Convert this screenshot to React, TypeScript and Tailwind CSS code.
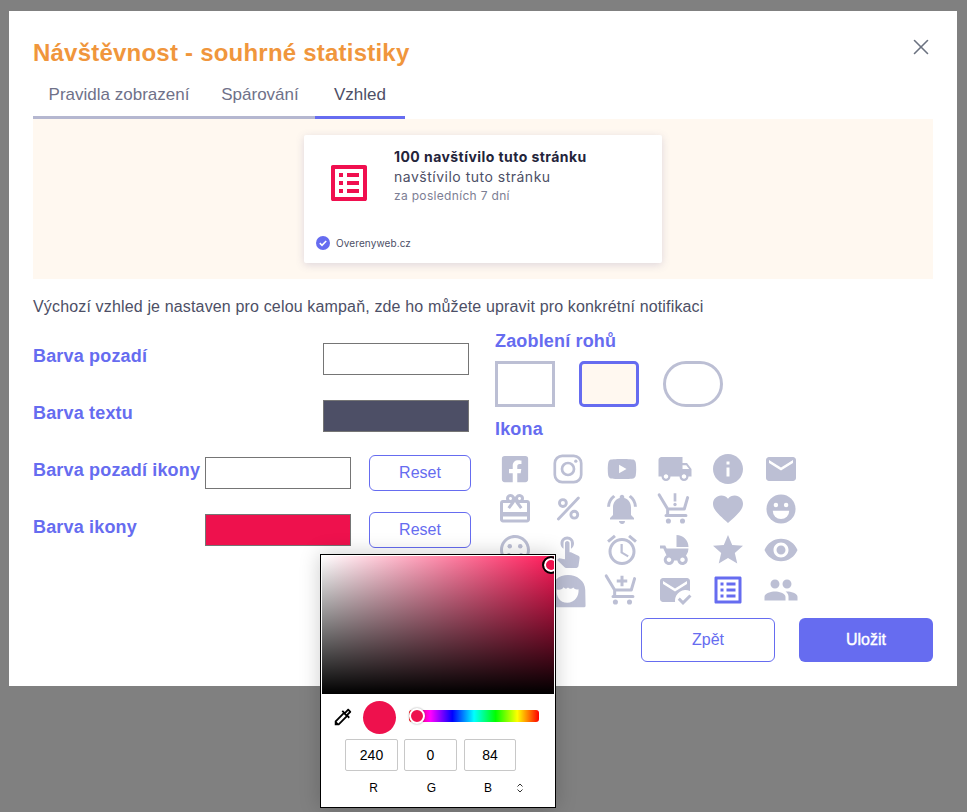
import { X } from "lucide-react";
import { FaFacebookSquare, FaYoutube } from "react-icons/fa";
import {
  MdLocalShipping,
  MdInfo,
  MdEmail,
  MdCardGiftcard,
  MdNotificationsActive,
  MdFavorite,
  MdOutlineSentimentSatisfied,
  MdTouchApp,
  MdOutlineAlarm,
  MdChildFriendly,
  MdStar,
  MdVisibility,
  MdMarkEmailRead,
  MdListAlt,
  MdPeople,
  MdOutlineColorize,
} from "react-icons/md";

const GRAY = "#bcbfd4";

function Instagram() {
  return (
    <svg width={36} height={36} viewBox="0 0 24 24" fill="none" stroke={GRAY} strokeWidth={1.8}>
      <rect x={3.2} y={3.2} width={17.6} height={17.6} rx={5} />
      <circle cx={12} cy={12} r={4} />
      <circle cx={17.2} cy={6.8} r={1.1} fill={GRAY} stroke="none" />
    </svg>
  );
}

function Percent() {
  return (
    <svg width={36} height={36} viewBox="0 0 24 24" fill="none" stroke={GRAY} strokeWidth={1.9}>
      <circle cx={8.6} cy={8} r={2.3} />
      <circle cx={16.2} cy={15.8} r={2.3} />
      <path d="M18.9 4.7 5.6 18.7" strokeLinecap="round" />
    </svg>
  );
}

function Cart({ mark }: { mark: "alert" | "plus" }) {
  return (
    <svg width={36} height={36} viewBox="0 0 24 24" fill="none" stroke={GRAY} strokeWidth={2}>
      <path d="M1.500 2.600 7.100 12v4.400M7.100 12h11.100l2.200-7.600M6 16.400h13.300" strokeLinecap="round" strokeLinejoin="round" />
      <circle cx={7.600} cy={20} r={1.700} fill={GRAY} stroke="none" />
      <circle cx={17} cy={20} r={1.700} fill={GRAY} stroke="none" />
      {mark === "alert" ? (
        <>
          <path d="M12 1.500V7" strokeWidth={1.800} />
          <circle cx={12} cy={9} r={1.100} fill={GRAY} stroke="none" />
        </>
      ) : (
        <path d="M12 2.500v7M8.500 6h7" strokeWidth={2} />
      )}
    </svg>
  );
}

function Smile() {
  return (
    <svg width={36} height={36} viewBox="0 0 24 24">
      <circle cx={12} cy={12} r={9.700} fill={GRAY} />
      <circle cx={8.600} cy={9.300} r={1.500} fill="#fff" />
      <circle cx={15.400} cy={9.300} r={1.500} fill="#fff" />
      <path d="M6.500 13.200h11a5.500 5.500 0 0 1-11 0z" fill="#fff" />
    </svg>
  );
}

function Woman() {
  return (
    <svg width={36} height={36} viewBox="0 0 24 24">
      <path d="M1 23.500V12C1 6 6 2 12 2s11.500 4 11.500 10l.2 10.500q0 1-1 1z" fill={GRAY} />
      <path
        d="M4.500 11.500c2 1 4-.2 4.500-1.300 1 1 2 1.300 3 .2 1 1.100 2.500 1 3.500 0 .8 1 2 1.600 3.500 1.100.5 4.500-2.500 9-7.500 9s-7.500-4-7-9z"
        fill="#fff"
      />
    </svg>
  );
}

const cls = "text-[#bcbfd4]";
const icons = [
  <FaFacebookSquare key="fb" size={30} className={cls} />,
  <Instagram key="ig" />,
  <FaYoutube key="yt" size={30} className={cls} />,
  <MdLocalShipping key="tr" size={36} className={cls} />,
  <MdInfo key="in" size={36} className={cls} />,
  <MdEmail key="em" size={36} className={cls} />,
  <MdCardGiftcard key="gi" size={36} className={cls} />,
  <Percent key="pc" />,
  <MdNotificationsActive key="be" size={36} className={cls} />,
  <Cart key="ca" mark="alert" />,
  <MdFavorite key="he" size={36} className={cls} />,
  <Smile key="sm" />,
  <MdOutlineSentimentSatisfied key="sa" size={36} className={cls} />,
  <MdTouchApp key="to" size={36} className={cls} />,
  <MdOutlineAlarm key="al" size={36} className={cls} />,
  <MdChildFriendly key="ch" size={36} className={cls} />,
  <MdStar key="st" size={36} className={cls} />,
  <MdVisibility key="ey" size={36} className={cls} />,
  <MdOutlineSentimentSatisfied key="hid" size={36} className={cls} />,
  <Woman key="wo" />,
  <Cart key="cp" mark="plus" />,
  <MdMarkEmailRead key="er" size={36} className={cls} />,
  <MdListAlt key="li" size={36} className="text-[#666cf0]" />,
  <MdPeople key="pe" size={36} className={cls} />,
];

function Label({ children }: { children: string }) {
  return <div className="text-[18px] leading-[26px] font-bold tracking-[0.17px] text-[#666cf0] whitespace-nowrap">{children}</div>;
}

function Swatch({ className }: { className: string }) {
  return <div className={`w-[146px] h-[32px] border border-[#757575] ${className}`} />;
}

function Reset() {
  return (
    <button className="w-[102px] h-[36px] -mt-[2px] ml-[18px] rounded-[6px] border border-[#666cf0] bg-white text-[16px] text-[#666cf0]">
      Reset
    </button>
  );
}

function Picker() {
  return (
    <div className="absolute left-[320px] top-[554px] w-[236px] h-[254px] bg-white border border-black p-[1px] shadow-[0_0_20px_rgba(0,0,0,0.2)]">
      <div className="relative h-[138px] overflow-hidden bg-[linear-gradient(to_top,#000,transparent),linear-gradient(to_right,#fff,#ff1a59)]">
        <div className="absolute left-[222px] top-[2px] w-[14px] h-[14px] rounded-full bg-[#ee114d] border-2 border-white outline-2 outline-black" />
      </div>
      <div className="flex items-center h-[46px] pl-[12px]">
        <MdOutlineColorize size={22} className="text-black -ml-[2px]" />
        <div className="w-[33px] h-[33px] ml-[9px] rounded-full bg-[#ee114d]" />
        <div className="relative w-[130px] h-[12px] ml-[13px] mt-[-2px] rounded-[3px] bg-[linear-gradient(to_right,#f00,#f0f,#00f,#0ff,#0f0,#ff0,#f00)]">
          <div className="absolute left-0 top-[-2px] w-[16px] h-[16px] rounded-full bg-[#ee114d] border-2 border-white shadow-[0_0_2px_rgba(0,0,0,0.4)]" />
        </div>
      </div>
      <div className="flex pl-[23px] mt-[-1px] gap-[6px]">
        <div className="w-[53px] h-[32px] flex items-center justify-center rounded-[2px] border border-[#c8c8c8] text-[14px] text-black">240</div>
        <div className="w-[53px] h-[32px] flex items-center justify-center rounded-[2px] border border-[#c8c8c8] text-[14px] text-black">0</div>
        <div className="w-[52px] h-[32px] ml-[1px] flex items-center justify-center rounded-[2px] border border-[#c8c8c8] text-[14px] text-black">84</div>
      </div>
      <div className="flex items-center pl-[25px] mt-[8px] text-[12px] text-black">
        <div className="w-[53px] text-center">R</div>
        <div className="w-[5px]" />
        <div className="w-[53px] text-center">G</div>
        <div className="w-[4px]" />
        <div className="w-[52px] text-center">B</div>
        <svg width={8} height={10} viewBox="0 0 8 10" fill="none" stroke="#333" strokeWidth={1} className="ml-[2px]">
          <path d="M1.500 3.500 4 1l2.500 2.500M1.500 6.500 4 9l2.500-2.500" />
        </svg>
      </div>
    </div>
  );
}

export default function App() {
  return (
    <div className="relative h-[812px] bg-[#808080] pt-[11px] pl-[9px] overflow-hidden font-['Liberation_Sans',Arial,sans-serif]">
      <div className="w-[948px] h-[675px] bg-white px-[24px] pt-[27px] pb-[24px] flex flex-col">
        <div className="flex items-start justify-between h-[30px]">
          <h1 className="text-[24px] leading-[30px] font-bold tracking-[0.22px] text-[#f0963c]">Návštěvnost - souhrné statistiky</h1>
          <X size={26} strokeWidth={1.500} className="text-[#6b7280] -mr-[1px] -mt-[4px]" />
        </div>
        <div className="flex mt-[14px] h-[37px] text-[17px] leading-[26px] text-center">
          <div className="w-[172px] border-b-[3px] border-[#b5b7d0] text-[#6f7189]">Pravidla zobrazení</div>
          <div className="w-[110px] border-b-[3px] border-[#b5b7d0] text-[#6f7189]">Spárování</div>
          <div className="w-[90px] border-b-[3px] border-[#666cf0] text-[#4d4f66]">Vzhled</div>
        </div>
        <div className="h-[160px] bg-[#fff8f0] flex justify-center pt-[16px]">
          <div className="w-[358px] h-[128px] ml-[-184px] bg-white rounded-[2px] shadow-[0_2px_8px_rgba(90,80,140,0.2)] flex flex-col relative left-[92px] font-['Inter',sans-serif] text-[#4d4f66]">
            <div className="flex pl-[21px] pt-[12px]">
              <MdListAlt size={48} className="text-[#f00f4f] mt-[12px]" />
              <div className="ml-[21px]">
                <div className="text-[14px] leading-[20px] font-bold text-[#23243a] tracking-[0.44px]">100 navštívilo tuto stránku</div>
                <div className="text-[14px] leading-[20px] tracking-[0.5px]">navštívilo tuto stránku</div>
                <div className="text-[12px] leading-[18px] tracking-[0.32px] text-[#7c7e94]">za posledních 7 dní</div>
              </div>
            </div>
            <div className="flex items-center mt-auto mb-[13px] pl-[12px] gap-[6px] text-[10px] leading-[14px] tracking-[0.1px]">
              <svg width={14} height={14} viewBox="0 0 14 14">
                <circle cx={7} cy={7} r={7} fill="#666cf0" />
                <path d="M3.800 7.200 6 9.300l4.200-4.300" fill="none" stroke="#fff" strokeWidth={1.600} />
              </svg>
              Overenyweb.cz
            </div>
          </div>
        </div>
        <p className="mt-[16px] text-[16px] leading-[24px] tracking-[0.155px] text-[#4d4f66]">
          Výchozí vzhled je nastaven pro celou kampaň, zde ho můžete upravit pro konkrétní notifikaci
        </p>
        <div className="flex mt-[10px]">
          <div className="w-[462px] pt-[14px] flex flex-col gap-[25px]">
            <div className="flex items-start h-[32px] justify-between w-[436px]">
              <Label>Barva pozadí</Label>
              <Swatch className="bg-white" />
            </div>
            <div className="flex items-start h-[32px] justify-between w-[436px]">
              <Label>Barva textu</Label>
              <Swatch className="bg-[#4d4f66]" />
            </div>
            <div className="flex items-start h-[32px]">
              <div className="w-[172px]"><Label>Barva pozadí ikony</Label></div>
              <Swatch className="bg-white" />
              <Reset />
            </div>
            <div className="flex items-start h-[32px]">
              <div className="w-[172px]"><Label>Barva ikony</Label></div>
              <Swatch className="bg-[#ee114d]" />
              <Reset />
            </div>
          </div>
          <div className="flex-1">
            <div className="-mt-[1px]"><Label>Zaoblení rohů</Label></div>
            <div className="flex gap-[24px] mt-[7px]">
              <div className="w-[60px] h-[46px] border-[3px] border-[#bcbfd4]" />
              <div className="w-[60px] h-[46px] border-[3px] border-[#666cf0] rounded-[5px] bg-[#fff8f0]" />
              <div className="w-[60px] h-[46px] border-[3px] border-[#bcbfd4] rounded-[23px]" />
            </div>
            <div className="mt-[9px]"><Label>Ikona</Label></div>
            <div className="grid grid-cols-[repeat(6,40px)] auto-rows-[40.300px] gap-x-[13.300px] mt-[7px]">
              {icons.map((ic, i) => (
                <div key={i} className="flex items-center justify-center w-[40px] overflow-visible">
                  {ic}
                </div>
              ))}
            </div>
          </div>
        </div>
        <div className="mt-auto flex justify-end gap-[24px]">
          <button className="w-[134px] h-[44px] rounded-[6px] border border-[#666cf0] bg-white text-[16px] text-[#666cf0]">Zpět</button>
          <button className="w-[134px] h-[44px] rounded-[6px] bg-[#666cf0] text-[16px] text-white [-webkit-text-stroke:0.4px_#fff]">Uložit</button>
        </div>
      </div>
      <Picker />
    </div>
  );
}
